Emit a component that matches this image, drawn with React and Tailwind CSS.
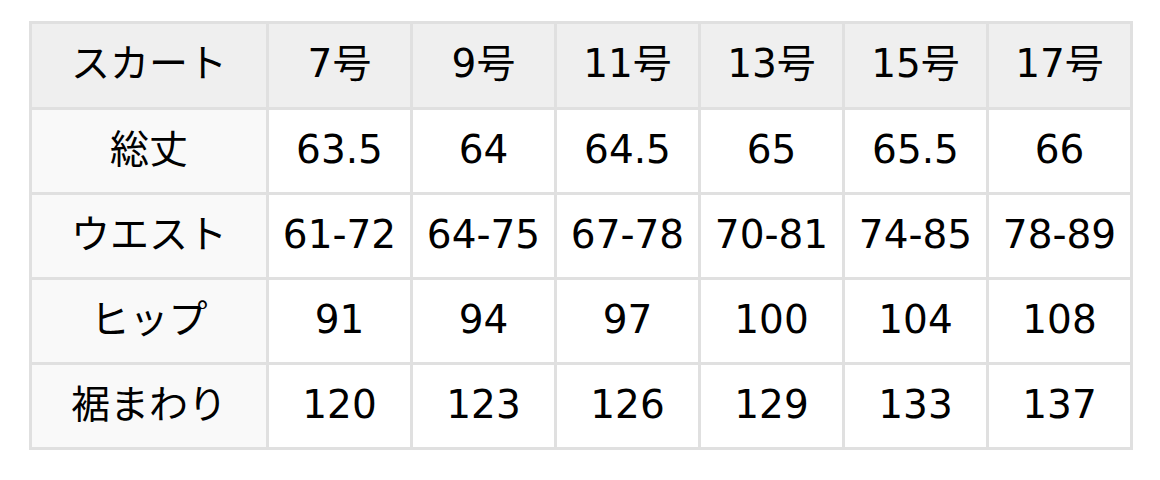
const header = ['スカート', '7号', '9号', '11号', '13号', '15号', '17号']

const rows = [
  ['総丈', '63.5', '64', '64.5', '65', '65.5', '66'],
  ['ウエスト', '61-72', '64-75', '67-78', '70-81', '74-85', '78-89'],
  ['ヒップ', '91', '94', '97', '100', '104', '108'],
  ['裾まわり', '120', '123', '126', '129', '133', '137'],
]

export default function App() {
  return (
    <div className="bg-white w-[1160px] h-[480px] pt-[21px] pl-[29px] font-['DejaVu_Sans','Noto_Sans_CJK_JP',sans-serif] text-black">
      <table className="border-collapse table-fixed w-[1101px] text-[39px] leading-none">
        <colgroup>
          <col className="w-[237px]" />
          <col className="w-[144px]" />
          <col className="w-[144px]" />
          <col className="w-[144px]" />
          <col className="w-[144px]" />
          <col className="w-[144px]" />
          <col className="w-[144px]" />
        </colgroup>
        <thead>
          <tr className="bg-[#efefef]">
            {header.map((h) => (
              <th key={h} className="h-[86px] border-[3px] border-[#e0e0e0] font-normal text-center p-0 pb-[4px]">
                {h}
              </th>
            ))}
          </tr>
        </thead>
        <tbody>
          {rows.map((r) => (
            <tr key={r[0]}>
              {r.map((c, i) => (
                <td
                  key={i}
                  className={`h-[85px] border-[3px] border-[#e0e0e0] text-center p-0 pb-[4px] ${i === 0 ? 'bg-[#f9f9f9]' : 'bg-white'}`}
                >
                  {c}
                </td>
              ))}
            </tr>
          ))}
        </tbody>
      </table>
    </div>
  )
}
